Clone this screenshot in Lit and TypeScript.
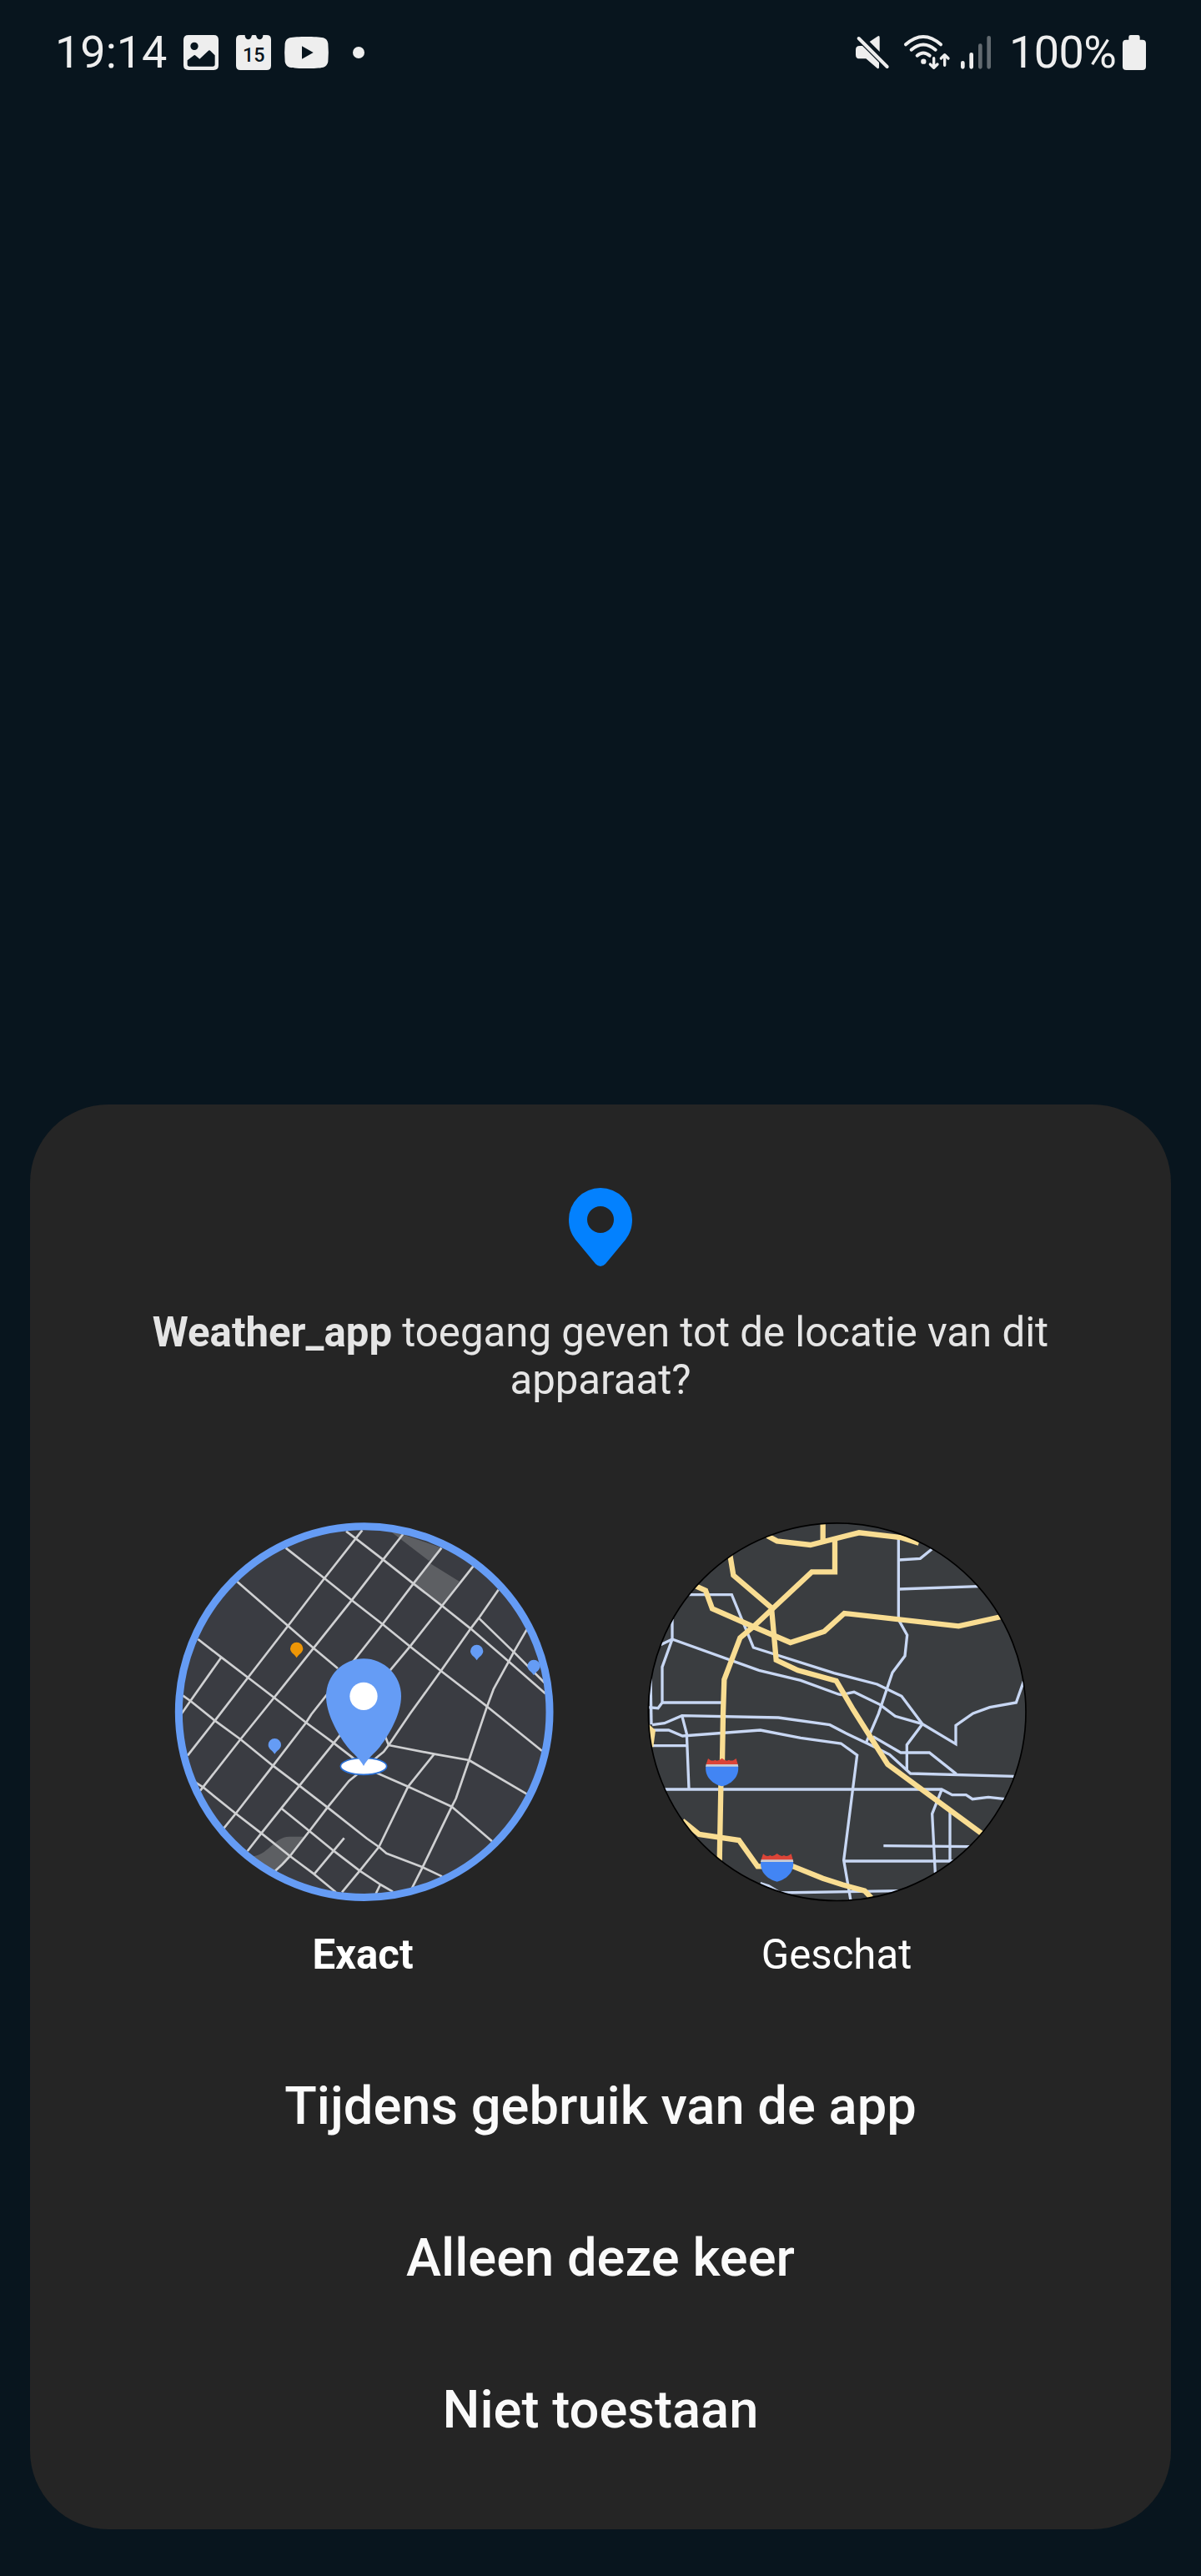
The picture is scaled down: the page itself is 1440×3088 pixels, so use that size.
import { LitElement, html, svg, css } from "lit";
import { customElement, property } from "lit/decorators.js";

type Shield = { x: number; y: number };

/* Street geometry of the precise map, in a 1410 x 1410 space. */
const STREETS = [
  "703,58 567,231 436,402 292,588 173,743 75,868",
  "850,72 778,164 665,310 528,482 386,660 265,810 120,995",
  "988,122 887,250 776,396 520,720 501,750 382,905 248,1077 205,1130",
  "1102,188 990,330 875,476 805,560 625,793 477,977 412,1058 340,1148 290,1212",
  "1193,272 1122,374 1093,412 986,564 875,718 798,831 780,855 755,875 680,940 655,960 578,1055 513,1140 443,1230 415,1260 390,1283",
  "1295,415 1248,496 1230,530 1176,628 1152,692 1087,885 1040,1023 1025,1052 920,1270 882,1345",
  "962,863 868,980 763,1197 694,1283 630,1360",
  "638,1165 530,1295",
  "768,1332 752,1365",
  "196,515 85,672 50,722",
  "645,62 680,88 778,164 887,250 990,330 1093,412 1230,530 1362,646",
  "1122,374 1248,496 1358,606",
  "428,122 567,231 665,310 776,396 875,476 986,564 1152,692 1350,852",
  "253,243 436,402 528,482 615,555",
  "786,800 798,831 962,863 1087,885 1295,1007",
  "112,450 196,515 292,588 386,660 501,750 600,823 670,877 760,933 868,980 1025,1052 1170,1177",
  "58,653 85,672 173,743 265,810 382,905 477,977 578,1055 720,1167 763,1197 790,1220 920,1270 990,1303",
  "103,965 130,982 248,1077 340,1148 443,1230 530,1295 608,1360",
  "412,1058 513,1140 600,1211 694,1283 768,1332 813,1358",
];

/* Secondary roads of the approximate map. */
const ROADS = [
  "165,290 322,290 400,480 690,572 845,612 933,655 1008,755 1128,827 1128,760 1190,717 1250,695 1345,678 1372,602",
  "108,378 108,450 72,550 72,678 57,698 22,695",
  "66,470 108,450 420,562 570,598 706,648 715,650 762,640 855,685 910,727 1008,755",
  "72,678 285,678",
  "30,590 33,757",
  "36,758 80,752 143,725 490,732 675,758 730,787 810,825 890,865 965,933 1337,943",
  "38,777 95,777 145,798 425,777 570,805 715,825 773,867 725,1245 750,1390",
  "143,725 160,790 168,988",
  "38,833 160,833",
  "78,990 1077,990 1115,1010 1165,1010 1188,1025 1245,1018 1306,1025",
  "1077,992 1043,1078 1054,1290",
  "1107,1070 1107,1247",
  "868,1193 1180,1196",
  "725,1248 1125,1248",
  "425,1328 455,1337 495,1362 925,1355",
  "1008,755 952,830 952,922",
  "830,800 930,858 1033,858 1130,935",
  "922,90 922,370 925,385 953,435 945,510 900,570 850,718 805,823",
  "922,165 1000,160 1042,126",
  "922,270 1210,260",
];

const HIGHWAYS = [
  "450,78 485,97 605,111 780,67 930,84 995,104",
  "650,30 650,97",
  "693,84 693,208 610,208 400,405 352,445 295,595 291,718 288,890 283,980 278,1250",
  "316,148 328,220 465,337 482,525 560,562 698,600 760,705 883,900 1223,1150",
  "188,257 228,275 252,340 400,405 533,462 655,422 727,357 1138,403 1292,369",
  "145,1103 205,1152 348,1173 415,1267 430,1267 543,1267 650,1310 720,1333 800,1355 824,1380",
];

const SHIELDS: Shield[] = [
  { x: 228, y: 884 },
  { x: 426, y: 1227 },
];

@customElement("status-bar")
export class StatusBar extends LitElement {
  static styles = css`
    :host {
      display: flex;
      justify-content: space-between;
      align-items: center;
      box-sizing: border-box;
      height: 126px;
      padding: 0 66px;
      color: #eeeeee;
      font-family: Roboto, sans-serif;
      font-size: 54px;
      line-height: 126px;
    }
    .side {
      display: flex;
      align-items: center;
    }
    .clock {
      width: 154px;
    }
    .percent {
      width: 136px;
      letter-spacing: -0.6px;
      white-space: nowrap;
    }
    svg {
      display: block;
      overflow: visible;
    }
    .image {
      margin-right: 21px;
    }
    .calendar {
      margin-right: 16px;
    }
    .video {
      margin-right: 29px;
    }
    .mute {
      margin-right: 18px;
    }
    .wifi {
      margin-right: 13px;
    }
    .signal {
      margin-right: 21px;
    }
    .day {
      font: 500 70px Roboto, sans-serif;
    }
  `;

  render() {
    return html`
      <div class="side">
        <span class="clock">19:14</span>
        <svg class="image" width="42" height="42" viewBox="0 0 126 126">
          <path
            fill="#eeeeee"
            fill-rule="evenodd"
            d="M18 0H109Q126 0 126 17V109Q126 126 109 126H18Q0 126 0 109V17Q0 0 18 0ZM39 26A14 14 0 1 0 39 54A14 14 0 1 0 39 26ZM14 91V106Q14 113 22 113H105Q113 113 113 106V73L97 57Q93 53 89 57L58 86L44 74Q40 70 36 74Z"
          />
        </svg>
        <svg class="calendar" width="42" height="42" viewBox="0 0 126 126">
          <path
            fill="#eeeeee"
            d="M16 0H32A12 14 0 0 0 56 3Q57 0 60 0H69Q72 0 73 3A12 14 0 0 0 97 0H110Q126 0 126 16V110Q126 126 110 126H16Q0 126 0 110V16Q0 0 16 0Z"
          />
          <text class="day" x="64" y="96" text-anchor="middle" fill="#08151e">15</text>
        </svg>
        <svg class="video" width="53" height="38" viewBox="0 0 159 114">
          <path
            fill="#eeeeee"
            fill-rule="evenodd"
            d="M79.500 0C105 0 127 1 140 4Q154 8 157 24Q160 57 157 90Q154 106 140 110C127 113 105 114 79.500 114C54 114 32 113 19 110Q5 106 2 90Q-1 57 2 24Q5 8 19 4C32 1 54 0 79.500 0ZM63 34V80L104 57Z"
          />
        </svg>
        <svg width="14" height="14" viewBox="0 0 14 14"><circle cx="7" cy="7" r="7" fill="#eeeeee" /></svg>
      </div>
      <div class="side">
        <svg class="mute" width="40" height="40" viewBox="0 0 120 120">
          <path fill="#eeeeee" d="M50 21L78 2Q86 -3 86 6V57Z" />
          <path fill="#eeeeee" d="M14 36H24L40 52L84 96V112Q84 121 77 116L37 82H14Q0 82 0 68V50Q0 36 14 36Z" />
          <path stroke="#08151e" stroke-width="8" d="M23 3L119 99" />
          <path stroke="#eeeeee" stroke-width="12" stroke-linecap="round" d="M11 9L113 111" />
        </svg>
        <svg class="wifi" width="55" height="40" viewBox="0 0 165 120">
          <g fill="none" stroke="#eeeeee" stroke-width="12" stroke-linecap="round" stroke-linejoin="round">
            <path d="M6 31Q69 -25 132 31" />
            <path d="M26 50Q69 13 113 50" />
            <path d="M47 71Q69 52 92 71" />
            <path stroke-width="10" d="M107 80V115M94 102L107 115L120 102M146 106V68M133 81L146 68L159 81" />
          </g>
          <circle cx="70" cy="92" r="9.500" fill="#eeeeee" />
        </svg>
        <svg class="signal" width="37" height="40" viewBox="0 0 111 120">
          <g stroke="#eeeeee" stroke-width="14" stroke-linecap="round">
            <path d="M7 97V112M38 67V112" />
            <path stroke="#626a70" d="M70 35V112M101 7V112" />
          </g>
        </svg>
        <span class="percent">100%</span>
        <svg width="28" height="42" viewBox="0 0 84 126">
          <path
            fill="#eeeeee"
            d="M29 0H55Q62 0 62 7V17H71Q84 17 84 30V113Q84 126 71 126H13Q0 126 0 113V30Q0 17 13 17H22V7Q22 0 29 0Z"
          />
        </svg>
      </div>
    `;
  }
}

@customElement("exact-map")
export class ExactMap extends LitElement {
  static styles = css`
    :host,
    svg {
      display: block;
    }
  `;

  private marker(x: number, y: number, color: string) {
    return svg`<path fill=${color} transform="translate(${x} ${y})"
      d="M0 -23A23 23 0 0 1 23 0C23 14 8 20 0 33C-8 20 -23 14 -23 0A23 23 0 0 1 0 -23Z" />`;
  }

  render() {
    return html`
      <svg width="470" height="470" viewBox="0 0 1410 1410">
        <defs>
          <clipPath id="disc"><circle cx="710" cy="711.500" r="668" /></clipPath>
        </defs>
        <circle cx="710" cy="711.500" r="668" fill="#3a3c42" />
        <g clip-path="url(#disc)">
          <path
            fill="#5d5f63"
            d="M795 55L990 122L943 168ZM948 178L1052 242L990 328L890 250ZM300 1232C365 1230 385 1160 440 1160H492L443 1230L380 1300Z"
          />
          <g fill="none" stroke="#cfd0d2" stroke-width="8" stroke-linejoin="round">
            ${STREETS.map((points) => svg`<polyline points=${points} />`)}
          </g>
          ${this.marker(467, 484, "#ee9606")} ${this.marker(1115, 493, "#659cf5")}
          ${this.marker(1320, 547, "#659cf5")} ${this.marker(388, 830, "#659cf5")}
        </g>
        <circle cx="710" cy="711.500" r="667" fill="none" stroke="#659cf5" stroke-width="27" />
        <ellipse cx="708" cy="907" rx="83" ry="30" fill="#ffffff" stroke="#2a70d6" stroke-width="5" />
        <path
          fill="#659cf5"
          d="M708 520A135 135 0 0 1 843 655C843 715 806 785 766 838C748 860 722 880 708 906C694 880 668 860 650 838C610 785 573 715 573 655A135 135 0 0 1 708 520Z"
        />
        <circle cx="708" cy="655" r="50" fill="#ffffff" />
      </svg>
    `;
  }
}

@customElement("rough-map")
export class RoughMap extends LitElement {
  static styles = css`
    :host,
    svg {
      display: block;
    }
  `;

  private shield({ x, y }: Shield) {
    return svg`<g transform="translate(${x} ${y})">
      <path fill="#4285f4" d="M1 22H117C122 56 98 86 59 95C20 86 -4 56 1 22Z" />
      <path fill="#c9cdd4" d="M2 15H116L118 24H0Z" />
      <path fill="#db4437" d="M9 -5L17 1Q26 5 34 0L41 3L50 0L59 -6L68 0L77 3L84 0Q92 5 101 1L110 -5L116 16H2Z" />
    </g>`;
  }

  render() {
    return html`
      <svg width="470" height="470" viewBox="0 0 1410 1410">
        <defs>
          <clipPath id="disc"><circle cx="701" cy="711.500" r="679" /></clipPath>
        </defs>
        <circle cx="701" cy="711.500" r="679" fill="#3a3d40" />
        <g clip-path="url(#disc)">
          <g fill="none" stroke="#c8d7f3" stroke-width="10">
            ${ROADS.map((points) => svg`<polyline points=${points} />`)}
          </g>
          <path fill="#f9dd92" d="M20 752L48 778L40 838H28Z" />
          <g fill="none" stroke="#f9dd92" stroke-width="19">
            ${HIGHWAYS.map((points) => svg`<polyline points=${points} />`)}
          </g>
          ${SHIELDS.map((s) => this.shield(s))}
        </g>
        <circle cx="701" cy="711.500" r="679" fill="none" stroke="#000000" stroke-width="5" />
      </svg>
    `;
  }
}

@customElement("app-root")
export class AppRoot extends LitElement {
  @property({ type: String }) appName = "Weather_app";

  static styles = css`
    :host {
      display: flex;
      flex-direction: column;
      box-sizing: border-box;
      width: 1440px;
      height: 3088px;
      padding-bottom: 56px;
      background: #08151e;
      font-family: Roboto, sans-serif;
    }
    .sheet {
      display: flex;
      flex-direction: column;
      align-items: center;
      box-sizing: border-box;
      height: 1708px;
      margin: auto 36px 0;
      padding-top: 100px;
      border-radius: 94px;
      background: #252525;
      color: #ffffff;
    }
    .pin {
      display: block;
    }
    .question {
      width: 1120px;
      margin: 51px 0 0;
      color: #e5e5e5;
      font-size: 49.15px;
      font-weight: 400;
      line-height: 57px;
      text-align: center;
    }
    .question b {
      font-weight: 700;
    }
    .choices {
      display: grid;
      grid-template-columns: 470px 470px;
      column-gap: 100px;
      margin-top: 132px;
    }
    .choice {
      display: flex;
      flex-direction: column;
      align-items: center;
    }
    .label {
      margin-top: 30px;
      font-size: 49.15px;
      line-height: 57px;
    }
    .label:not(.chosen) {
      margin-right: 4px;
    }
    .chosen {
      font-weight: 700;
    }
    .actions {
      display: flex;
      flex-direction: column;
      align-items: center;
      margin-top: 61px;
    }
    .action {
      height: 182px;
      padding: 0;
      border: 0;
      background: none;
      color: #fafafa;
      font: 500 63.25px/182px Roboto, sans-serif;
    }
  `;

  render() {
    return html`
      <status-bar></status-bar>
      <section class="sheet">
        <svg class="pin" width="76" height="94" viewBox="0 0 76 94">
          <path
            fill="#0381fe"
            fill-rule="evenodd"
            d="M38 0A38 38 0 0 1 76 38C76 48 73 55 68 62L44 91Q38 97 32 91L8 62C3 55 0 48 0 38A38 38 0 0 1 38 0ZM38 22A16 16 0 1 0 38 54A16 16 0 1 0 38 22Z"
          />
        </svg>
        <p class="question"><b>${this.appName}</b> toegang geven tot de locatie van dit apparaat?</p>
        <div class="choices">
          <div class="choice">
            <exact-map></exact-map>
            <span class="label chosen">Exact</span>
          </div>
          <div class="choice">
            <rough-map></rough-map>
            <span class="label">Geschat</span>
          </div>
        </div>
        <div class="actions">
          <button class="action">Tijdens gebruik van de app</button>
          <button class="action">Alleen deze keer</button>
          <button class="action">Niet toestaan</button>
        </div>
      </section>
    `;
  }
}
